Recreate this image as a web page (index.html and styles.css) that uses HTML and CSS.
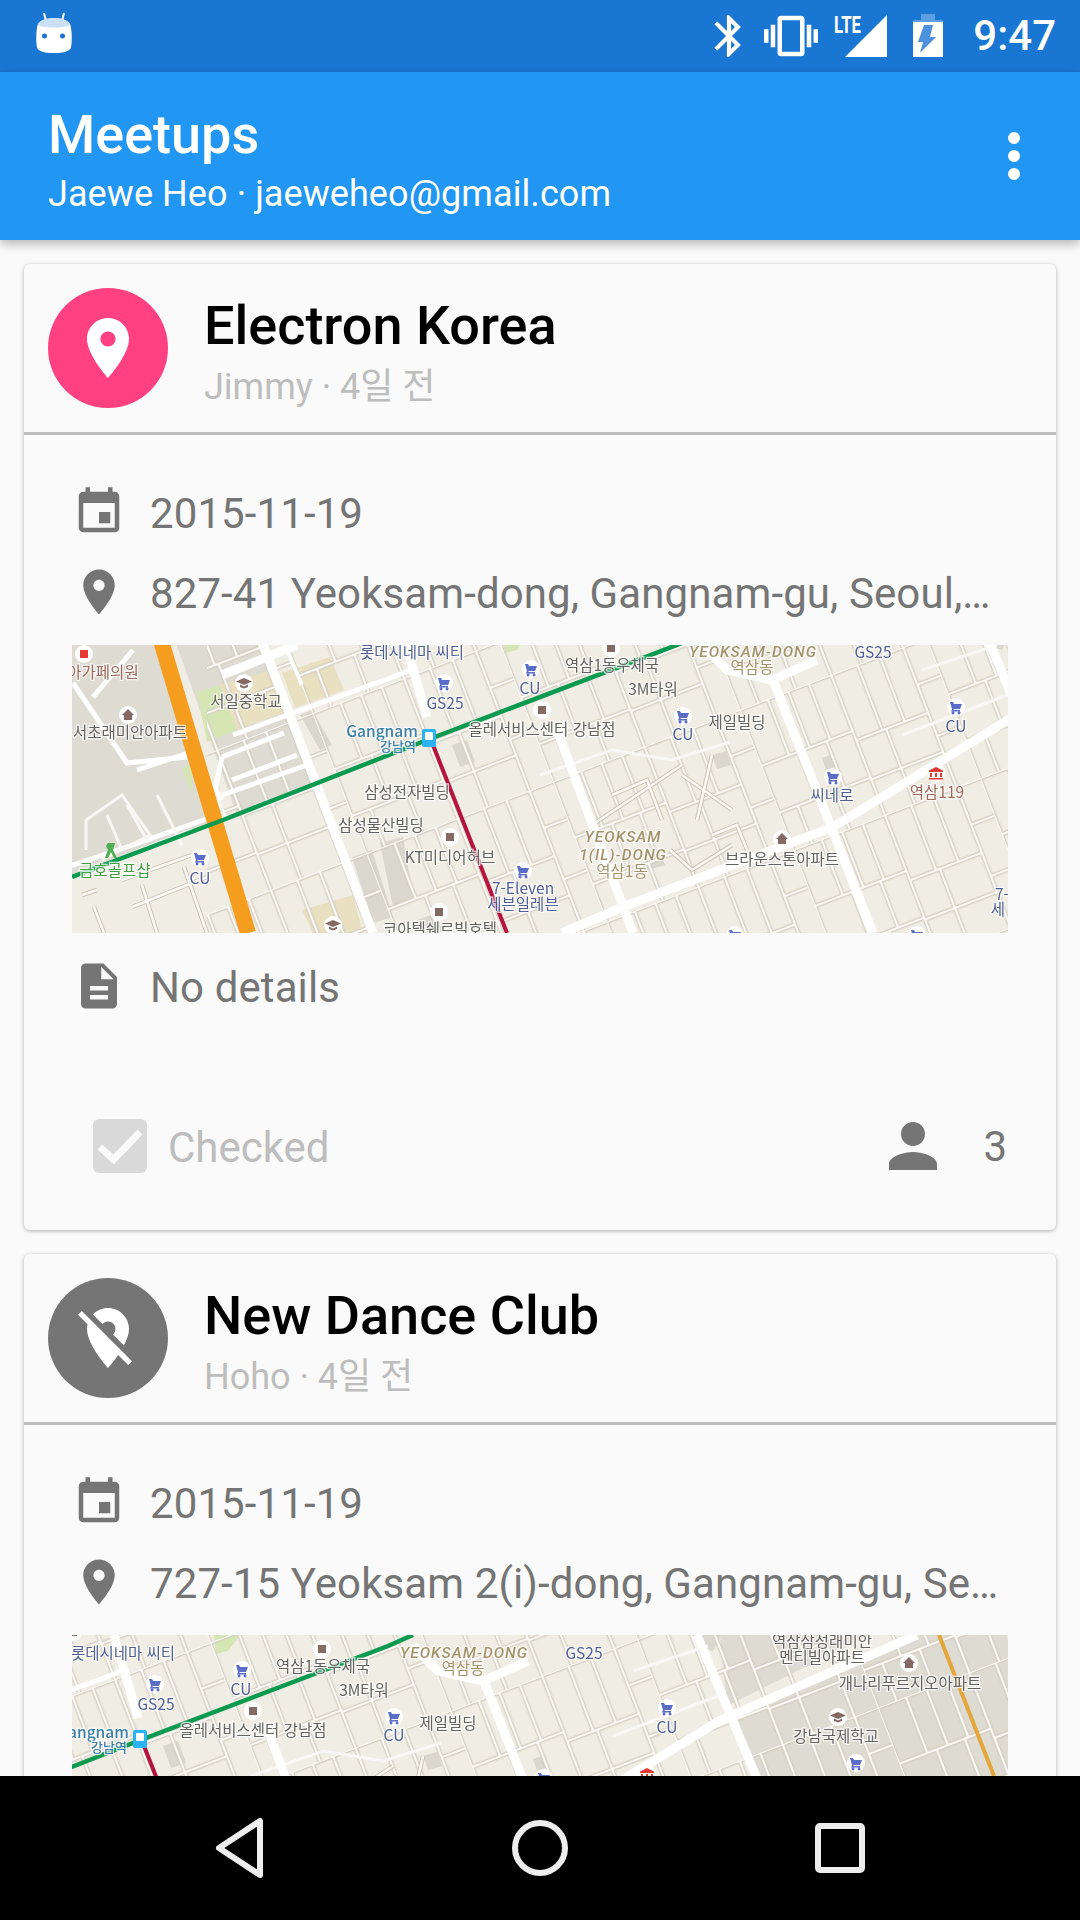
FILE: index.html
```html
<!DOCTYPE html>
<html lang="ko">
<head>
<meta charset="utf-8">
<title>Meetups</title>
<link rel="stylesheet" href="styles.css">
</head>
<body>
<div class="screen">
  <header class="status">
    <svg class="st-app" viewBox="0 0 36 44" width="36" height="44">
      <path class="st-line" d="M8 1l2 8M28 1l-2 8"/>
      <path class="st-white" d="M1 16c0-6 7-10 17-10s17 4 17 10c1 6 1 14 0 19-.5 4-7 6-17 6S1.500 39 1 35c-1-5-1-13 0-19z"/>
      <path class="st-band" d="M1.500 13c1-4 8-7 16.500-7s15.500 3 16.500 7c-4 2-10 2.500-16.500 2.500S5.500 15 1.500 13z"/>
      <circle class="st-eye" cx="8.500" cy="24" r="2.500"/>
      <circle class="st-eye" cx="26.500" cy="24" r="2.500"/>
    </svg>
    <svg class="st-bt" viewBox="0 0 24 24" width="50" height="50"><path class="st-white" d="M17.710 7.710L12 2h-1v7.590L6.410 5 5 6.410 10.590 12 5 17.590 6.410 19 11 14.410V22h1l5.710-5.710-4.300-4.290 4.300-4.290zM13 5.830l1.880 1.880L13 9.590V5.830zm1.880 10.460L13 18.170v-3.760l1.880 1.880z"/></svg>
    <svg class="st-vib" viewBox="0 0 24 24" width="54" height="54"><path class="st-white" d="M0 15h2V9H0v6zm3 2h2V7H3v10zm19-8v6h2V9h-2zm-3 8h2V7h-2v10zM16.500 3h-9C6.670 3 6 3.670 6 4.500v15c0 .830.670 1.500 1.500 1.500h9c.830 0 1.500-.670 1.500-1.500v-15c0-.830-.670-1.500-1.500-1.500zM16 19H8V5h8v14z"/></svg>
    <svg class="st-sig" viewBox="0 0 54 72" width="54" height="72">
      <text class="st-lte" x="0" y="33" textLength="27" lengthAdjust="spacingAndGlyphs">LTE</text>
      <path class="st-white" d="M11 57L53 15v42z"/>
    </svg>
    <svg class="st-bat" viewBox="0 0 30 72" width="30" height="72">
      <path class="st-dim" d="M8 14h14v6h8v6H0v-6h8z"/>
      <path class="st-white" d="M0 22h30v35H0z"/>
      <path class="st-bolt" d="M11 25h9l-3 12h6L7 53l3-11H5z"/>
    </svg>
    <span class="st-time">9:47</span>
  </header>

  <div class="appbar">
    <div class="appbar-text">
      <div class="appbar-title">Meetups</div>
      <div class="appbar-sub">Jaewe Heo · jaeweheo@gmail.com</div>
    </div>
    <div class="overflow"><i></i><i></i><i></i></div>
  </div>

  <main class="list">
    <article class="card">
      <div class="card-head">
        <div class="avatar avatar-on">
          <svg viewBox="0 0 24 24" width="72" height="72"><path class="ic-white" d="M12 2C8.130 2 5 5.130 5 9c0 5.250 7 13 7 13s7-7.750 7-13c0-3.870-3.130-7-7-7zm0 9.500c-1.380 0-2.500-1.120-2.500-2.500s1.120-2.500 2.500-2.500 2.500 1.120 2.500 2.500-1.120 2.500-2.500 2.500z"/></svg>
        </div>
        <div class="head-text">
          <div class="title">Electron Korea</div>
          <div class="byline">Jimmy · 4일 전</div>
        </div>
      </div>
      <div class="card-body">
        <div class="row">
          <svg class="icon" viewBox="0 0 24 24" width="54" height="54"><path class="ic-gray" d="M17 12h-5v5h5v-5zM16 1v2H8V1H6v2H5c-1.110 0-1.990.900-1.990 2L3 19c0 1.100.890 2 2 2h14c1.100 0 2-.900 2-2V5c0-1.100-.900-2-2-2h-1V1h-2zm3 18H5V8h14v11z"/></svg>
          <span class="row-text">2015-11-19</span>
        </div>
        <div class="row">
          <svg class="icon" viewBox="0 0 24 24" width="54" height="54"><path class="ic-gray" d="M12 2C8.130 2 5 5.130 5 9c0 5.250 7 13 7 13s7-7.750 7-13c0-3.870-3.130-7-7-7zm0 9.500c-1.380 0-2.500-1.120-2.500-2.500s1.120-2.500 2.500-2.500 2.500 1.120 2.500 2.500-1.120 2.500-2.500 2.500z"/></svg>
          <span class="row-text">827-41 Yeoksam-dong, Gangnam-gu, Seoul,…</span>
        </div>
        <svg class="map" viewBox="0 0 936 288" width="936" height="288">
          <defs>
            <path id="minor-e" d="M0 0v150M30 0v60M52 0v60M74 0v60M98 0v150M126 0v70M150 0v70M175 0v150M40 60v50M70 60v50M130 70v80M20 110v40M60 110v40M0 0h200M0 60h98M0 110h98M98 70h77M98 112h77M175 40h25M175 95h25"/>
            <path id="minor-x" d="M50 235L120 210M60 262L135 232M22 262L32 288M70 240L85 288M10 250L25 245M112 222L135 288M520 180L610 120M625 175L640 110M610 130L660 165M598 205L620 225 660 200M540 150L575 135 590 175M640 190L665 180 675 205"/>
            <pattern id="blocks" width="200" height="150" patternUnits="userSpaceOnUse" patternTransform="rotate(-21)">
              <use href="#minor-e" class="m-case"/>
              <use href="#minor-e" class="m-fill"/>
            </pattern>
            <g id="i-cart"><circle class="poi-bg" r="9"/><path class="poi-blue" d="M-6-5h3l1 2h8l-2 5h-6l-1 1h7v1.500h-9l1-2.500zM-3 4.500a1.500 1.500 0 1 0 .1 0zM3 4.500a1.500 1.500 0 1 0 .1 0z"/></g>
            <g id="i-home"><circle class="poi-bg" r="9"/><path class="poi-brown" d="M0-6l6 6H4v5H-4V0H-6z"/></g>
            <g id="i-school"><circle class="poi-bg" r="9"/><path class="poi-brown" d="M0-5l8 3.500L0 2-8-1.500zM-4 1.500L0 3.500l4-2V4L0 5.500-4 4z"/></g>
            <g id="i-sq"><circle class="poi-bg" r="9"/><path class="poi-brown" d="M-4-4h8v8h-8z"/></g>
            <g id="streets">
              <rect class="land" x="-20" y="-30" width="1300" height="340"/>
              <path class="z-gray" d="M-20-30H84L151 175-20 240zM94-30H184L245 140 165 170zM935-30h190L944 60zM955 75L1160-30h60l40 200H985z"/>
              <path class="z-bld" d="M228 70l12-5 20 35-12 5zM280 212l20-7 21 67-20 6zM308 198l23-6 10 60-20 10zM380 100l15-5 8 22-15 5zM640 110l14-4 5 14-14 4zM750 113l12-4 4 12-12 4zM570 218l20-6 3 8-20 6zM915-15h25l-10 20-10-3zM345 275l20-7 5 20h-20z"/>
              <path class="z-school" d="M148 40l53-15 17 40-53 20zM210 28l48-16 14 33-49 18zM230 265l51-15 10 38h-50z"/>
              <path class="z-green" d="M125 47l23-7 17 45-30 12zM110 123l10-3v28zM430-15h30l-15 20-12 3z"/>
              <rect class="z-blocks" x="135" y="-30" width="1150" height="340" fill="url(#blocks)"/>
              <use href="#minor-x" class="m-case"/>
              <use href="#minor-x" class="m-fill"/>
              <path class="road-s" d="M1 38L55 118 115 112M21 52L61 5M-5 222L55 202 140 172M161 90L221 68 321 32 345 22M150 112L212 88M160 135L225 110M150 150L235 120M150 112L143 145 150 155M65 125L125 105"/>
              <path class="road-t" d="M14 205V175L50 150 78 190 30 215M35 170L50 205M55 160L75 195M130 120L155 175M85 150L110 200M468 130L540 105 600 115 658 97M830 90L935 50M850 25L925 0"/>
              <path class="road-m" d="M187-11L301 288M331-11L355 72M701 35L801 288M485 85L561 288M1134-11L936 75 761 182 551 262 490 288M914-11L975 135M225 0L150 30M630 0L655 25 700 35 745 15"/>
              <path class="road-w" d="M215 5L230 40M0 232L120 185"/>
              <path class="rail-o" d="M87-11L176 288"/>
              <path class="rail-t" d="M1156-11L1211 130"/>
              <path class="rail-g" d="M0 232L151 175 355 95 605 0 630-11"/>
              <path class="rail-r" d="M361 100L435 288"/>
              <rect class="stn" x="350" y="84" width="14" height="18" rx="2"/>
              <rect class="stn-in" x="353" y="87" width="8" height="8" rx="1"/>
              <circle class="poi-bg" cx="12" cy="9" r="9"/><rect class="poi-red" x="8" y="5" width="8" height="8"/>
              <use href="#i-school" x="172" y="38"/>
              <use href="#i-home" x="56" y="70"/>
              <use href="#i-cart" x="372" y="38"/>
              <use href="#i-cart" x="459" y="24"/>
              <use href="#i-sq" x="470" y="65"/>
              <use href="#i-sq" x="378" y="192"/>
              <use href="#i-cart" x="451" y="226"/>
              <use href="#i-cart" x="128" y="213"/>
              <use href="#i-sq" x="367" y="267"/>
              <use href="#i-school" x="261" y="280"/>
              <use href="#i-sq" x="539" y="3"/>
              <use href="#i-cart" x="611" y="71"/>
              <use href="#i-cart" x="884" y="62"/>
              <use href="#i-cart" x="761" y="132"/>
              <use href="#i-home" x="710" y="194"/>
              <use href="#i-cart" x="663" y="290"/>
              <use href="#i-cart" x="845" y="290"/>
              <use href="#i-home" x="1126" y="17"/>
              <use href="#i-school" x="1055" y="71"/>
              <use href="#i-cart" x="1073" y="117"/>
              <use href="#i-sq" x="290" y="-14"/>
              <circle class="poi-bg" cx="864" cy="128" r="9"/>
              <path class="poi-red" d="M864 122l7 3.500v1.500h-14v-1.500zM858 128h2v4h-2zM863 128h2v4h-2zM868 128h2v4h-2zM857 133h14v1.500h-14z"/>
              <path class="poi-green" d="M36 198h7l-2 7 4 8h-3l-3-6-3 6h-3l3-8-2-4z"/>
            </g>
          </defs>
          <use href="#streets"/>
          <text class="lb lb-red" x="31" y="33">아가페의원</text>
          <text class="lb" x="174" y="62">서일중학교</text>
          <text class="lb" x="58" y="93">서초래미안아파트</text>
          <text class="lb lb-blue" x="340" y="13">롯데시네마 씨티</text>
          <text class="lb lb-blue" x="373" y="64">GS25</text>
          <text class="lb lb-blue" x="458" y="49">CU</text>
          <text class="lb lb-stn" x="310" y="92">Gangnam</text>
          <text class="lb lb-stn lb-sm" x="326" y="106">강남역</text>
          <text class="lb" x="470" y="90">올레서비스센터 강남점</text>
          <text class="lb" x="335" y="153">삼성전자빌딩</text>
          <text class="lb" x="309" y="186">삼성물산빌딩</text>
          <text class="lb" x="378" y="218">KT미디어허브</text>
          <text class="lb lb-blue" x="451" y="249">7-Eleven</text>
          <text class="lb lb-blue" x="451" y="265">세븐일레븐</text>
          <text class="lb lb-grn" x="43" y="231">금호골프샵</text>
          <text class="lb lb-blue" x="128" y="239">CU</text>
          <text class="lb" x="368" y="290">코아텔쉐르빌호텔</text>
          <text class="lb lb-area" x="681" y="12">YEOKSAM-DONG</text>
          <text class="lb lb-tan" x="680" y="28">역삼동</text>
          <text class="lb lb-blue" x="801" y="13">GS25</text>
          <text class="lb" x="540" y="26">역삼1동우체국</text>
          <text class="lb" x="581" y="50">3M타워</text>
          <text class="lb lb-blue" x="611" y="95">CU</text>
          <text class="lb" x="665" y="83">제일빌딩</text>
          <text class="lb lb-blue" x="884" y="87">CU</text>
          <text class="lb lb-blue" x="760" y="156">씨네로</text>
          <text class="lb lb-red" x="865" y="153">역삼119</text>
          <text class="lb" x="710" y="220">브라운스톤아파트</text>
          <text class="lb lb-area" x="551" y="197">YEOKSAM</text>
          <text class="lb lb-area" x="551" y="215">1(IL)-DONG</text>
          <text class="lb lb-tan" x="550" y="232">역삼1동</text>
          <text class="lb lb-blue" x="930" y="255">7-</text>
          <text class="lb lb-blue" x="926" y="270">세</text>
        </svg>
        <div class="row">
          <svg class="icon" viewBox="0 0 24 24" width="54" height="54"><path class="ic-gray" d="M14 2H6c-1.100 0-1.990.900-1.990 2L4 20c0 1.100.890 2 1.990 2H18c1.100 0 2-.900 2-2V8l-6-6zm2 16H8v-2h8v2zm0-4H8v-2h8v2zm-3-5V3.500L18.500 9H13z"/></svg>
          <span class="row-text">No details</span>
        </div>
        <div class="card-foot">
          <div class="check">
            <svg class="check-box" viewBox="0 0 54 54" width="54" height="54">
              <rect class="cb-bg" width="54" height="54" rx="6"/>
              <path class="cb-tick" d="M7 28l13.500 12.500L47 13"/>
            </svg>
            <span class="check-text">Checked</span>
          </div>
          <div class="count">
            <svg viewBox="0 0 24 24" width="72" height="72"><path class="ic-gray" d="M12 12c2.210 0 4-1.790 4-4s-1.790-4-4-4-4 1.790-4 4 1.790 4 4 4zm0 2c-2.670 0-8 1.340-8 4v2h16v-2c0-2.660-5.330-4-8-4z"/></svg>
            <span class="count-num">3</span>
          </div>
        </div>
      </div>
    </article>

    <article class="card">
      <div class="card-head">
        <div class="avatar avatar-off">
          <svg viewBox="0 0 24 24" width="72" height="72"><path class="ic-white" d="M12 6.500c1.380 0 2.500 1.120 2.500 2.500 0 .740-.330 1.390-.830 1.850l3.630 3.630c.980-1.860 1.700-3.800 1.700-5.480 0-3.870-3.130-7-7-7-1.980 0-3.760.830-5.040 2.150l3.190 3.190c.460-.520 1.110-.840 1.850-.840zm4.370 9.600l-4.630-4.630-.110-.110L3.270 3 2 4.270l3.180 3.180C5.070 7.950 5 8.470 5 9c0 5.250 7 13 7 13s1.670-1.850 3.380-4.350L18.730 21 20 19.730l-3.630-3.630z"/></svg>
        </div>
        <div class="head-text">
          <div class="title">New Dance Club</div>
          <div class="byline">Hoho · 4일 전</div>
        </div>
      </div>
      <div class="card-body">
        <div class="row">
          <svg class="icon" viewBox="0 0 24 24" width="54" height="54"><path class="ic-gray" d="M17 12h-5v5h5v-5zM16 1v2H8V1H6v2H5c-1.110 0-1.990.900-1.990 2L3 19c0 1.100.890 2 2 2h14c1.100 0 2-.900 2-2V5c0-1.100-.900-2-2-2h-1V1h-2zm3 18H5V8h14v11z"/></svg>
          <span class="row-text">2015-11-19</span>
        </div>
        <div class="row">
          <svg class="icon" viewBox="0 0 24 24" width="54" height="54"><path class="ic-gray" d="M12 2C8.130 2 5 5.130 5 9c0 5.250 7 13 7 13s7-7.750 7-13c0-3.870-3.130-7-7-7zm0 9.500c-1.380 0-2.500-1.120-2.500-2.500s1.120-2.500 2.500-2.500 2.500 1.120 2.500 2.500-1.120 2.500-2.500 2.500z"/></svg>
          <span class="row-text">727-15 Yeoksam 2(i)-dong, Gangnam-gu, Se…</span>
        </div>
        <svg class="map" viewBox="289 -11 936 288" width="936" height="288">
          <use href="#streets"/>
          <text class="lb lb-blue" x="340" y="13">롯데시네마 씨티</text>
          <text class="lb lb-blue" x="373" y="64">GS25</text>
          <text class="lb lb-blue" x="458" y="49">CU</text>
          <text class="lb lb-stn" x="310" y="92">Gangnam</text>
          <text class="lb lb-stn lb-sm" x="326" y="106">강남역</text>
          <text class="lb" x="470" y="90">올레서비스센터 강남점</text>
          <text class="lb lb-area" x="681" y="12">YEOKSAM-DONG</text>
          <text class="lb lb-tan" x="680" y="28">역삼동</text>
          <text class="lb lb-blue" x="801" y="13">GS25</text>
          <text class="lb" x="540" y="26">역삼1동우체국</text>
          <text class="lb" x="581" y="50">3M타워</text>
          <text class="lb lb-blue" x="611" y="95">CU</text>
          <text class="lb" x="665" y="83">제일빌딩</text>
          <text class="lb lb-blue" x="884" y="87">CU</text>
          <text class="lb" x="1039" y="1">역삼삼성래미안</text>
          <text class="lb" x="1039" y="17">멘티빌아파트</text>
          <text class="lb" x="1127" y="43">개나리푸르지오아파트</text>
          <text class="lb" x="1053" y="96">강남국제학교</text>
        </svg>
      </div>
    </article>
  </main>

  <nav class="navbar">
    <div class="nav-item"><svg viewBox="0 0 52 62" width="52" height="62"><path class="nav-ic" d="M46 4v54L5 31z"/></svg></div>
    <div class="nav-item"><svg viewBox="0 0 62 62" width="62" height="62"><circle class="nav-ic" cx="31" cy="31" r="25"/></svg></div>
    <div class="nav-item"><svg viewBox="0 0 62 62" width="62" height="62"><rect class="nav-ic" x="9" y="9" width="44" height="44" rx="2"/></svg></div>
  </nav>
</div>
</body>
</html>
```

FILE: styles.css
```css
* { box-sizing: border-box; }
html, body { margin: 0; padding: 0; }
body { background: #fafafa; font-family: Roboto, "Noto Sans CJK KR", sans-serif; }
.screen { position: relative; width: 1080px; height: 1920px; overflow: hidden; background: #fafafa; }

/* status bar */
.status { display: flex; align-items: center; height: 72px; background: #1976d2; padding: 0 24px 0 36px; color: #fff; }
.st-app { margin-right: auto; margin-top: -4px; }
.st-vib { margin-left: 10px; }
.st-sig { margin-left: 16px; }
.st-bat { margin-left: 25px; }
.st-time { margin-left: 30px; font-size: 42px; font-weight: 500; line-height: 72px; }
.st-white { fill: #fff; }
.st-line { fill: none; stroke: #fff; stroke-width: 2; }
.st-band { fill: #cbdff5; }
.st-eye { fill: #1976d2; }
.st-dim { fill: #5e9de2; }
.st-bolt { fill: #4c92dd; }
.st-lte { fill: #fff; font-family: Roboto, sans-serif; font-size: 24px; font-weight: 700; }

/* app bar */
.appbar { position: relative; z-index: 1; display: flex; align-items: center; justify-content: space-between; height: 168px; padding: 0 60px 0 48px; background: #2196f3; box-shadow: 0 4px 10px rgba(0,0,0,.28); color: #fff; }
.appbar-text { margin-top: 11px; }
.appbar-title { font-size: 54px; font-weight: 500; line-height: 60px; }
.appbar-sub { font-size: 36px; line-height: 48px; margin-top: 5px; letter-spacing: .08px; }
.overflow { display: flex; flex-direction: column; gap: 6px; }
.overflow i { display: block; width: 12px; height: 12px; border-radius: 50%; background: #fff; }

/* cards */
.list { display: flex; flex-direction: column; gap: 24px; padding: 24px; }
.card { flex: none; background: #fafafa; border-radius: 6px; box-shadow: 0 1px 4px rgba(0,0,0,.3); overflow: hidden; }
.card-head { display: flex; align-items: center; gap: 36px; height: 171px; padding: 0 24px; border-bottom: 3px solid #bdbdbd; }
.avatar { display: flex; align-items: center; justify-content: center; width: 120px; height: 120px; border-radius: 50%; }
.avatar-on { background: #ff4081; }
.avatar-off { background: #757575; }
.head-text { margin-top: 10px; }
.title { font-size: 54px; font-weight: 500; line-height: 60px; color: #000; }
.byline { font-size: 36px; line-height: 48px; color: #bdbdbd; margin-top: 7px; }

.card-body { display: flex; flex-direction: column; gap: 26px; padding: 50px 48px 57px; }
.row { display: flex; align-items: center; gap: 24px; height: 54px; }
.row-text { font-size: 42px; line-height: 54px; letter-spacing: .1px; color: #757575; white-space: nowrap; padding-top: 4px; }
.icon { flex: none; }
.ic-gray { fill: #757575; }
.ic-white { fill: #fff; }

.card-foot { display: flex; align-items: center; justify-content: space-between; margin-top: 80px; padding: 0 1px 0 21px; height: 54px; }
.check { display: flex; align-items: center; gap: 21px; }
.check-text { font-size: 42px; color: #bdbdbd; line-height: 54px; padding-top: 4px; }
.cb-bg { fill: #d9d9d9; }
.cb-tick { fill: none; stroke: #fafafa; stroke-width: 7; }
.count { display: flex; align-items: center; gap: 34px; }
.count-num { font-size: 42px; color: #757575; line-height: 54px; padding-top: 2px; }

/* map */
.map { display: block; flex: none; background: #f0ede4; filter: blur(.6px); }
.land { fill: #f0ede4; }
.z-gray { fill: #dedbd3; }
.z-bld { fill: #dad7ce; }
.z-school { fill: #e9dfc1; }
.z-green { fill: #d5e5b4; }
.m-case { fill: none; stroke: #c9c2b1; stroke-width: 4.500; }
.m-fill { fill: none; stroke: #faf9f6; stroke-width: 2.600; }
.road-m { fill: none; stroke: #fff; stroke-width: 9; }
.road-s { fill: none; stroke: #fff; stroke-width: 5; }
.road-t { fill: none; stroke: #f8f7f3; stroke-width: 3; }
.road-w { fill: none; stroke: #fff; stroke-width: 4; }
.rail-o { fill: none; stroke: #f59d1e; stroke-width: 16; }
.rail-t { fill: none; stroke: #e3a63b; stroke-width: 4; }
.rail-g { fill: none; stroke: #0b9a50; stroke-width: 4.500; }
.rail-r { fill: none; stroke: #b5143f; stroke-width: 4; }
.stn { fill: #2bb3f3; }
.stn-in { fill: #fff; }
.poi-bg { fill: #fff; }
.poi-blue { fill: #5b6ec7; }
.poi-brown { fill: #846a62; }
.poi-red { fill: #e53935; }
.poi-green { fill: #4caf50; }
.lb { font-family: "Noto Sans CJK KR", Roboto, sans-serif; font-size: 15.500px; text-anchor: middle; fill: #62625f; stroke: #fff; stroke-width: 2.500px; stroke-opacity: .75; paint-order: stroke; }
.lb-blue { fill: #515f94; }
.lb-red { fill: #9c6a5c; }
.lb-grn { fill: #43a047; }
.lb-stn { fill: #3c7fa8; font-weight: 500; }
.lb-sm { font-size: 13px; }
.lb-tan { fill: #a3936d; }
.lb-area { fill: #a3936d; font-style: italic; font-weight: 500; letter-spacing: 1px; font-family: Roboto, sans-serif; }

/* nav */
.navbar { position: absolute; left: 0; right: 0; bottom: 0; display: grid; grid-template-columns: repeat(3, 300px); height: 144px; padding: 0 90px; background: #000; }
.nav-item { display: flex; align-items: center; justify-content: center; }
.nav-ic { fill: none; stroke: #eee; stroke-width: 6; stroke-linejoin: round; }
```
